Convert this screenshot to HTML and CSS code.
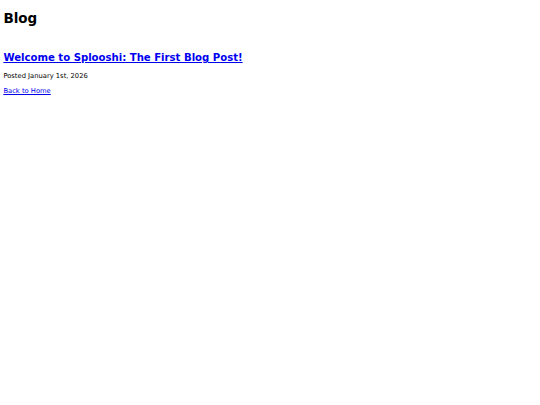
FILE: index.html
```html
<!DOCTYPE html>
<html>
<head>
<meta charset="utf-8">
<title>Blog</title>
<link rel="stylesheet" href="styles.css">
</head>
<body class="page">
<h1 class="title">Blog</h1>
<div class="post">
<h2 class="post-title"><a class="post-link" href="#">Welcome to Splooshi: The First Blog Post!</a></h2>
<p class="post-date">Posted January 1st, 2026</p>
</div>
<p class="back"><a class="back-link" href="#">Back to Home</a></p>
</body>
</html>
```
FILE: styles.css
```css
html {
  font-size: 6.75px;
}
.page {
  margin: 3.375px;
  font-family: "DejaVu Sans", sans-serif;
  font-size: 6.75px;
  color: #000;
  background: #fff;
}
.title {
  font-size: 2em;
  margin: 7px 0 9px;
  font-weight: bold;
}
.post {
  margin-top: 26px;
}
.post-title {
  font-size: 1.5em;
  margin: 8px 0 9px;
  font-weight: bold;
}
.post-link, .back-link {
  color: #0000ee;
  text-decoration: underline;
}
.post-date {
  margin: 7px 0 7px;
}
.back {
  margin: 7px 0;
}
```
